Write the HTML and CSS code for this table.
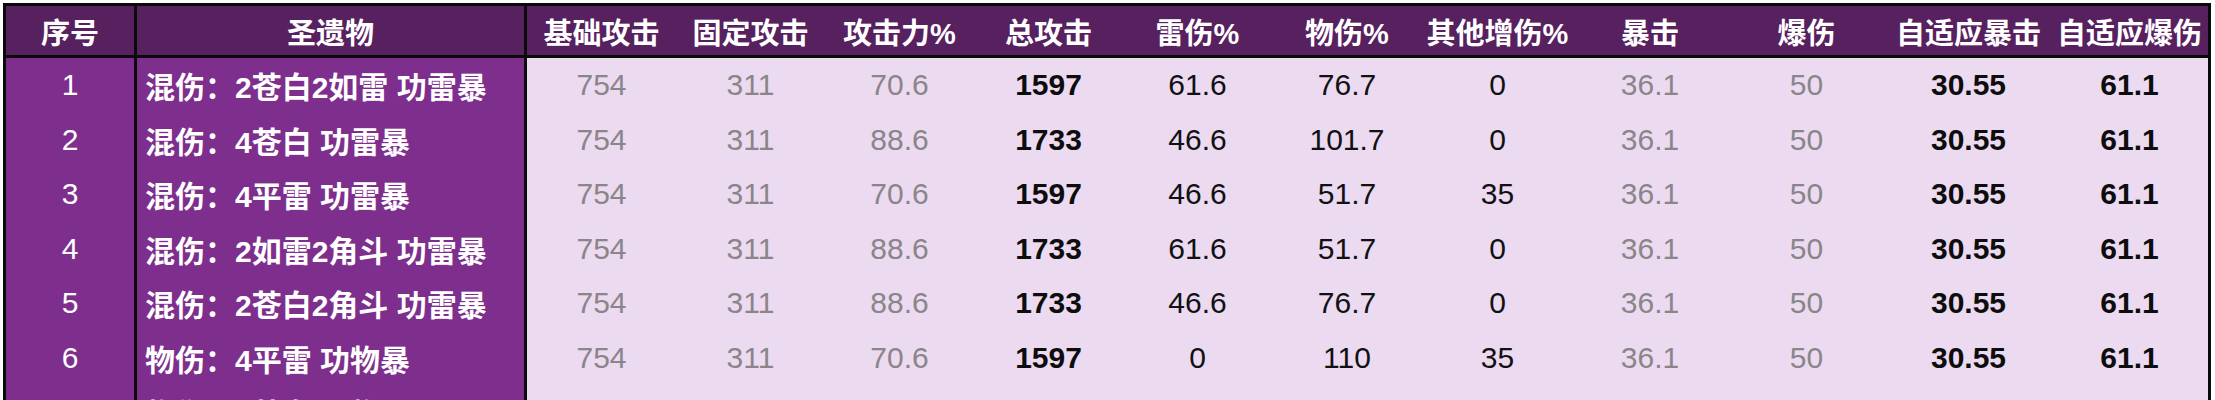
FILE: index.html
```html
<!DOCTYPE html>
<html lang="zh-CN">
<head>
<meta charset="utf-8">
<title>圣遗物对比</title>
<link rel="stylesheet" href="styles.css">
</head>
<body>
<div class="sheet">
  <div class="h sep">序号</div>
  <div class="h sep">圣遗物</div>
  <div class="h">基础攻击</div>
  <div class="h">固定攻击</div>
  <div class="h">攻击力%</div>
  <div class="h">总攻击</div>
  <div class="h">雷伤%</div>
  <div class="h">物伤%</div>
  <div class="h">其他增伤%</div>
  <div class="h">暴击</div>
  <div class="h">爆伤</div>
  <div class="h">自适应暴击</div>
  <div class="h">自适应爆伤</div>

  <div class="idx sep">1</div><div class="name sep">混伤：2苍白2如雷 功雷暴</div>
  <div class="c g">754</div><div class="c g">311</div><div class="c g">70.6</div><div class="c b">1597</div><div class="c k">61.6</div><div class="c k">76.7</div><div class="c k">0</div><div class="c g">36.1</div><div class="c g">50</div><div class="c b">30.55</div><div class="c b">61.1</div>

  <div class="idx sep">2</div><div class="name sep">混伤：4苍白 功雷暴</div>
  <div class="c g">754</div><div class="c g">311</div><div class="c g">88.6</div><div class="c b">1733</div><div class="c k">46.6</div><div class="c k">101.7</div><div class="c k">0</div><div class="c g">36.1</div><div class="c g">50</div><div class="c b">30.55</div><div class="c b">61.1</div>

  <div class="idx sep">3</div><div class="name sep">混伤：4平雷 功雷暴</div>
  <div class="c g">754</div><div class="c g">311</div><div class="c g">70.6</div><div class="c b">1597</div><div class="c k">46.6</div><div class="c k">51.7</div><div class="c k">35</div><div class="c g">36.1</div><div class="c g">50</div><div class="c b">30.55</div><div class="c b">61.1</div>

  <div class="idx sep">4</div><div class="name sep">混伤：2如雷2角斗 功雷暴</div>
  <div class="c g">754</div><div class="c g">311</div><div class="c g">88.6</div><div class="c b">1733</div><div class="c k">61.6</div><div class="c k">51.7</div><div class="c k">0</div><div class="c g">36.1</div><div class="c g">50</div><div class="c b">30.55</div><div class="c b">61.1</div>

  <div class="idx sep">5</div><div class="name sep">混伤：2苍白2角斗 功雷暴</div>
  <div class="c g">754</div><div class="c g">311</div><div class="c g">88.6</div><div class="c b">1733</div><div class="c k">46.6</div><div class="c k">76.7</div><div class="c k">0</div><div class="c g">36.1</div><div class="c g">50</div><div class="c b">30.55</div><div class="c b">61.1</div>

  <div class="idx sep">6</div><div class="name sep">物伤：4平雷 功物暴</div>
  <div class="c g">754</div><div class="c g">311</div><div class="c g">70.6</div><div class="c b">1597</div><div class="c k">0</div><div class="c k">110</div><div class="c k">35</div><div class="c g">36.1</div><div class="c g">50</div><div class="c b">30.55</div><div class="c b">61.1</div>

  <div class="idx sep">7</div><div class="name sep">物伤：4苍白 功物暴</div>
  <div class="c g">754</div><div class="c g">311</div><div class="c g">88.6</div><div class="c b">1733</div><div class="c k">0</div><div class="c k">135</div><div class="c k">0</div><div class="c g">36.1</div><div class="c g">50</div><div class="c b">30.55</div><div class="c b">61.1</div>
</div>
</body>
</html>
```

FILE: styles.css
```css
html, body {
  margin: 0;
  padding: 0;
  background: #ffffff;
  overflow: hidden;
}

body {
  padding: 3px 0 0 3px;
  font-family: "Liberation Sans", "Noto Sans CJK SC", sans-serif;
}

.sheet {
  display: grid;
  width: 2208px;
  box-sizing: border-box;
  border: 3px solid #0a0a0a;
  grid-template-columns: 131px 390px 149px 149px 149px 149px 149px 150px 151px 154px 159px 165px 157px;
  grid-template-rows: 52px;
  grid-auto-rows: 54.5px;
}

.sheet > div {
  box-sizing: border-box;
  display: flex;
  align-items: center;
  justify-content: center;
  white-space: nowrap;
}

.h {
  background: #57205f;
  color: #ffffff;
  font-weight: bold;
  font-size: 29px;
  border-bottom: 3px solid #0a0a0a;
}

.sep {
  border-right: 3px solid #0a0a0a;
}

.idx {
  background: #7e2e8d;
  color: #ffffff;
  font-size: 30px;
}

.sheet > .name {
  background: #7e2e8d;
  color: #ffffff;
  font-size: 30px;
  font-weight: bold;
  justify-content: flex-start;
  padding-left: 8px;
}

.c {
  background: #ecdaf1;
  font-size: 30px;
}

.g {
  color: #8a8589;
}

.k {
  color: #111111;
}

.b {
  color: #0d0d0d;
  font-weight: bold;
}
```
